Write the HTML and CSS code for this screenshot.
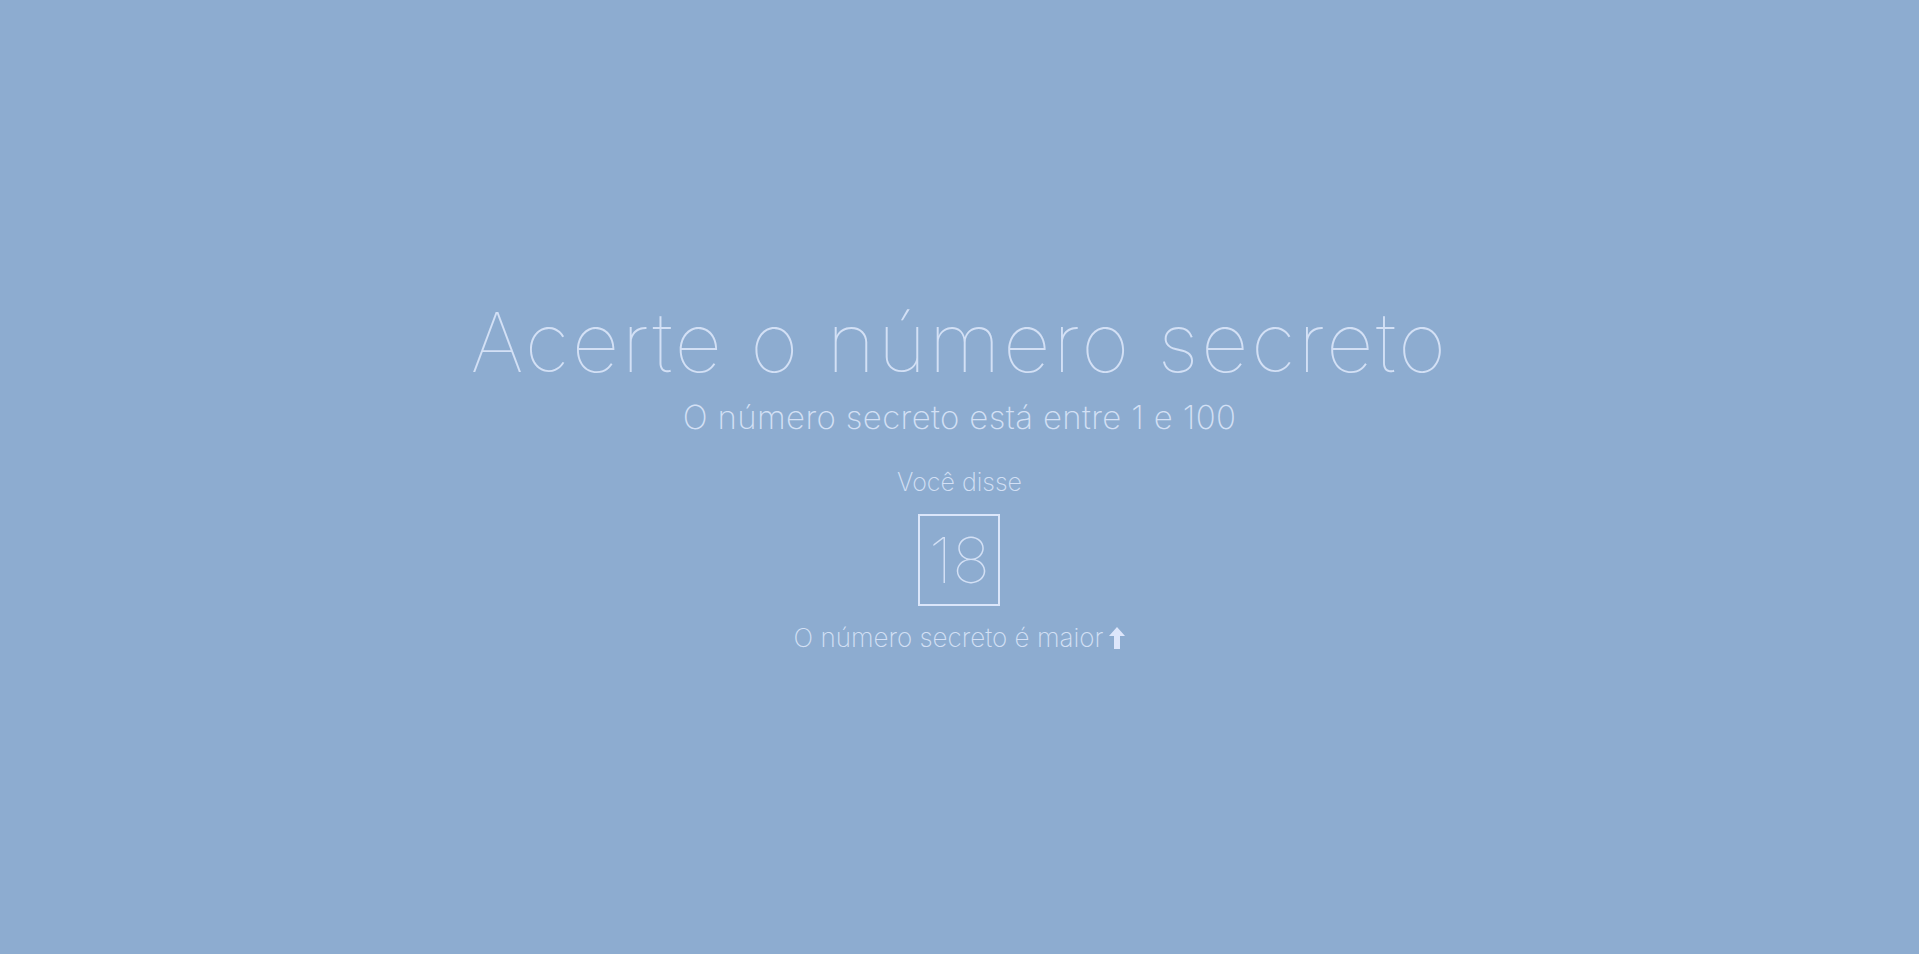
FILE: index.html
```html
<!DOCTYPE html>
<html lang="pt-BR">
<head>
<meta charset="utf-8">
<title>Acerte o número secreto</title>
<link rel="stylesheet" href="styles.css">
</head>
<body>
<main class="game">
  <h1 class="title">Acerte o número secreto</h1>
  <p class="subtitle">O número secreto está entre 1 e 100</p>
  <div class="guess">
    <p class="guess-label">Você disse</p>
    <div class="guess-box">18</div>
    <p class="hint">O número secreto é maior
      <svg class="arrow" viewBox="0 0 16 22" width="16" height="22" aria-hidden="true"><path d="M8 0 L16 9 L11 9 L11 22 L5 22 L5 9 L0 9 Z" fill="currentColor"/></svg>
    </p>
  </div>
</main>
</body>
</html>
```

FILE: styles.css
```css
html, body {
  margin: 0;
  padding: 0;
}
body {
  background: #8dacd0;
  font-family: Inter, "Noto Sans", sans-serif;
  color: #d3e0f5;
}
.game {
  height: 100vh;
  display: flex;
  flex-direction: column;
  align-items: center;
  justify-content: center;
  text-align: center;
}
.title {
  margin: 0;
  font-size: 83px;
  font-weight: 100;
  line-height: 83px;
  letter-spacing: 2.5px;
}
.subtitle {
  margin: 14px 0 0;
  font-size: 33px;
  font-weight: 200;
  line-height: 39.6px;
  letter-spacing: 0.35px;
}
.guess {
  display: flex;
  flex-direction: column;
  align-items: center;
  margin-top: 30px;
}
.guess-label {
  margin: 0;
  font-size: 25px;
  font-weight: 200;
  line-height: 30px;
}
.guess-box {
  margin-top: 17px;
  width: 78px;
  height: 88px;
  border: 2px solid #dbe6fa;
  display: flex;
  align-items: center;
  justify-content: center;
  font-size: 63px;
  font-weight: 100;
}
.hint {
  margin: 16px 0 0;
  font-size: 26px;
  font-weight: 200;
  line-height: 31.2px;
  height: 31.2px;
  display: flex;
  align-items: center;
  gap: 6px;
}
.arrow {
  color: #dde6fb;
}
```
